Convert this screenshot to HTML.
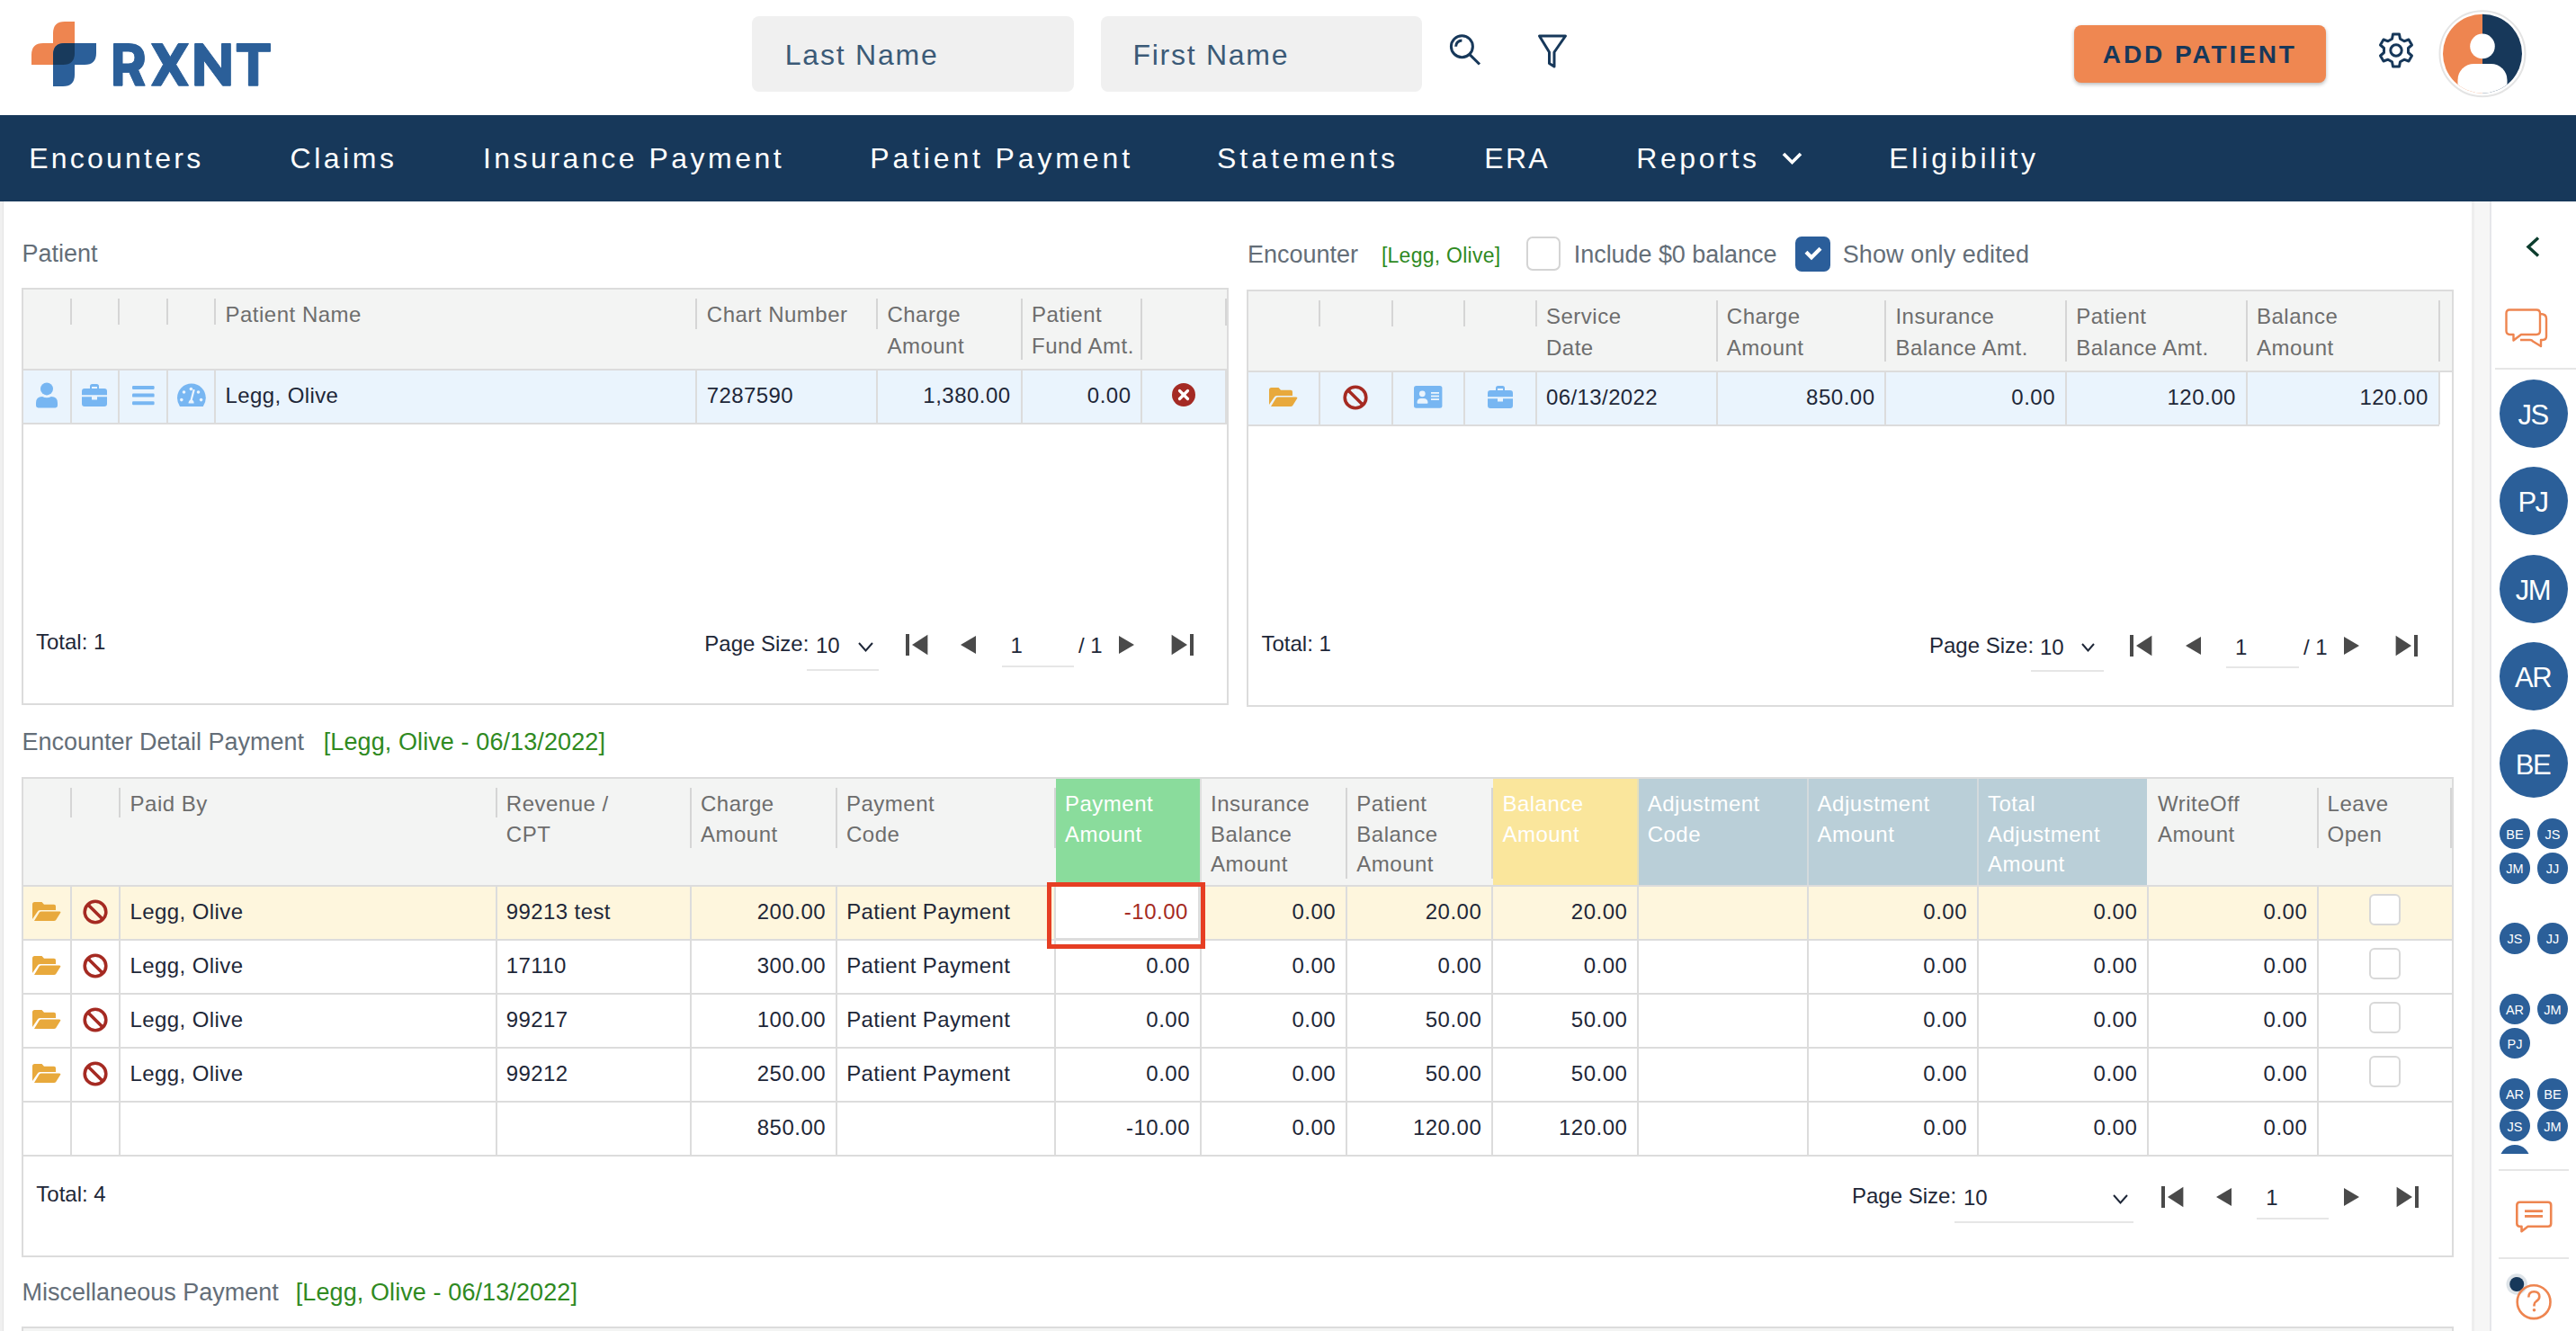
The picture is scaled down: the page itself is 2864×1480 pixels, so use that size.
<!DOCTYPE html>
<html><head><meta charset="utf-8"><style>
html,body{margin:0;padding:0;}
body{width:2864px;height:1480px;position:relative;overflow:hidden;background:#fff;font-family:"Liberation Sans",sans-serif;}
.t{position:absolute;white-space:nowrap;}
.r{position:absolute;}
svg.r{overflow:visible;}
</style></head><body>
<svg class="r" style="left:30px;top:20px" width="82" height="80" viewBox="0 0 82 80">
<path d="M29 17 Q29 4 42 4 H53 V52 H5 V41 Q5 28 18 28 H29 Z" fill="#ee8550"/>
<path d="M29 41 Q29 28 42 28 H77 V39 Q77 52 64 52 H53 V63 Q53 76 40 76 H29 Z" fill="#2b5f99"/>
<path d="M29 41 Q29 28 42 28 H53 V39 Q53 52 40 52 H29 Z" fill="#183a5c"/>
</svg>
<svg class="r" style="left:0px;top:0px" width="320" height="110" viewBox="0 0 320 110"><g fill="#2b5f99" stroke="#2b5f99" stroke-width="1" stroke-linejoin="round">
<path fill-rule="evenodd" d="M126.5 48.5 H143 Q160.5 48.5 160.5 64.5 Q160.5 74 153.6 77.8 L161.2 95.2 H150.5 L143.8 80.4 H136 V95.2 H126.5 Z M136 57 V71 H143 Q150 71 150 64 Q150 57 143 57 Z"/>
<path d="M168.4 48.5 H180.5 L189.3 63.6 L198.2 48.5 H209.6 L195.6 71.7 L209.6 95.2 H198.5 L188.6 79.1 L179 95.2 H168.4 L181.6 71.7 Z"/>
<path d="M216.7 48.5 H225.5 L246.5 77 V48.5 H256.3 V95.2 H247.5 L226.6 66.9 V95.2 H216.7 Z"/>
<path d="M263.2 48.5 H300.5 V57.3 H286.8 V95.2 H276.4 V57.3 H263.2 Z"/></g></svg>
<div class="r" style="left:836px;top:18px;width:358px;height:84px;background:#f0f0f0;border-radius:8px;"></div>
<div class="r" style="left:1224px;top:18px;width:357px;height:84px;background:#f0f0f0;border-radius:8px;"></div>
<div class="t" style="left:872.80px;top:44.91px;font-size:32px;line-height:32px;color:#3b5a77;letter-spacing:1.77px;">Last Name</div>
<div class="t" style="left:1259.50px;top:44.91px;font-size:32px;line-height:32px;color:#3b5a77;letter-spacing:1.73px;">First Name</div>
<svg class="r" style="left:1605px;top:32px" width="48" height="48" viewBox="0 0 48 48"><g fill="none" stroke="#17385a" stroke-width="3"><circle cx="20.4" cy="19.7" r="12"/><line x1="29" y1="28.6" x2="40" y2="39.5"/><path d="M13.6 19.7 A6.8 6.8 0 0 1 20.4 12.9"/></g></svg>
<svg class="r" style="left:1700px;top:30px" width="50" height="50" viewBox="0 0 50 50"><path d="M11.5 10 H40.5 L28 28 V44 L22.5 40.5 V28 Z" fill="none" stroke="#17385a" stroke-width="3" stroke-linejoin="round"/></svg>
<div class="r" style="left:2306px;top:28px;width:280px;height:64px;background:#ef8751;border-radius:8px;box-shadow:0 2px 4px rgba(0,0,0,0.28);"></div>
<div class="t" style="left:2337.80px;top:47.30px;font-size:28px;line-height:28px;color:#17385a;font-weight:bold;letter-spacing:2.91px;">ADD PATIENT</div>
<svg class="r" style="left:2640px;top:33px" width="48" height="48" viewBox="0 0 48 48"><g fill="none" stroke="#17385a" stroke-width="3" stroke-linejoin="round">
<path d="M20.5 5 H27.5 L28.5 10.2 L33 12.8 L38 11 L41.5 17 L37.5 20.5 V25.5 L41.5 29 L38 35 L33 33.2 L28.5 35.8 L27.5 41 H20.5 L19.5 35.8 L15 33.2 L10 35 L6.5 29 L10.5 25.5 V20.5 L6.5 17 L10 11 L15 12.8 L19.5 10.2 Z"/>
<circle cx="24" cy="23" r="6.2"/></g></svg>
<svg class="r" style="left:2710px;top:10px" width="100" height="100" viewBox="0 0 100 100"><defs><clipPath id="avc"><circle cx="50" cy="49.7" r="44"/></clipPath></defs>
<circle cx="50" cy="49.7" r="47.5" fill="none" stroke="#e4e4e4" stroke-width="2"/>
<g clip-path="url(#avc)"><rect x="0" y="0" width="50" height="100" fill="#ee8550"/><rect x="50" y="0" width="50" height="100" fill="#17385a"/>
<circle cx="50" cy="41.4" r="13.8" fill="#fff"/><rect x="22.5" y="61" width="55" height="60" rx="18" fill="#fff"/></g></svg>
<div class="r" style="left:0px;top:128px;width:2864px;height:96px;background:#17385a;"></div>
<div class="t" style="left:32.20px;top:160.11px;font-size:32px;line-height:32px;color:#ffffff;letter-spacing:3.23px;">Encounters</div>
<div class="t" style="left:322.60px;top:160.11px;font-size:32px;line-height:32px;color:#ffffff;letter-spacing:3.50px;">Claims</div>
<div class="t" style="left:536.90px;top:160.11px;font-size:32px;line-height:32px;color:#ffffff;letter-spacing:3.51px;">Insurance Payment</div>
<div class="t" style="left:967.20px;top:160.11px;font-size:32px;line-height:32px;color:#ffffff;letter-spacing:3.86px;">Patient Payment</div>
<div class="t" style="left:1353.00px;top:160.11px;font-size:32px;line-height:32px;color:#ffffff;letter-spacing:4.02px;">Statements</div>
<div class="t" style="left:1650.20px;top:160.11px;font-size:32px;line-height:32px;color:#ffffff;letter-spacing:2.35px;">ERA</div>
<div class="t" style="left:1819.20px;top:160.11px;font-size:32px;line-height:32px;color:#ffffff;letter-spacing:3.62px;">Reports</div>
<div class="t" style="left:2100.20px;top:160.11px;font-size:32px;line-height:32px;color:#ffffff;letter-spacing:3.83px;">Eligibility</div>
<svg class="r" style="left:1978px;top:165px" width="28" height="22" viewBox="0 0 28 22"><path d="M5 6 L14.5 15.5 L24 6" fill="none" stroke="#fff" stroke-width="3.6"/></svg>
<div class="r" style="left:0px;top:224px;width:3px;height:1256px;background:#f0f0f0;"></div>
<div class="r" style="left:3px;top:224px;width:1px;height:1256px;background:#e4e4e4;"></div>
<div class="r" style="left:2748px;top:224px;width:20px;height:1256px;background:#f6f6f6;"></div>
<div class="r" style="left:2748px;top:224px;width:3px;height:1256px;background:#eeeeee;"></div>
<div class="r" style="left:2768px;top:224px;width:2px;height:1256px;background:#e6e7ea;"></div>
<div class="t" style="left:24.50px;top:269.14px;font-size:27px;line-height:27px;color:#646e78;">Patient</div>
<div class="r" style="left:24px;top:320px;width:1342px;height:464px;background:#fff;border:2px solid #dcdcdc;box-sizing:border-box;"></div>
<div class="r" style="left:26px;top:322px;width:1338px;height:88px;background:#f3f4f3;"></div>
<div class="r" style="left:26px;top:410px;width:1338px;height:2px;background:#dcdcdc;"></div>
<div class="r" style="left:26px;top:412px;width:1336px;height:58px;background:#eaf4fd;"></div>
<div class="r" style="left:26px;top:470px;width:1338px;height:2px;background:#dcdcdc;"></div>
<div class="r" style="left:78px;top:412px;width:2px;height:58px;background:#dcdcdc;"></div>
<div class="r" style="left:131px;top:412px;width:2px;height:58px;background:#dcdcdc;"></div>
<div class="r" style="left:185px;top:412px;width:2px;height:58px;background:#dcdcdc;"></div>
<div class="r" style="left:238px;top:412px;width:2px;height:58px;background:#dcdcdc;"></div>
<div class="r" style="left:773px;top:412px;width:2px;height:58px;background:#dcdcdc;"></div>
<div class="r" style="left:974px;top:412px;width:2px;height:58px;background:#dcdcdc;"></div>
<div class="r" style="left:1135px;top:412px;width:2px;height:58px;background:#dcdcdc;"></div>
<div class="r" style="left:1268px;top:412px;width:2px;height:58px;background:#dcdcdc;"></div>
<div class="r" style="left:1362px;top:412px;width:2px;height:58px;background:#dcdcdc;"></div>
<div class="r" style="left:78px;top:332px;width:2px;height:29px;background:#d5d5d5;"></div>
<div class="r" style="left:131px;top:332px;width:2px;height:29px;background:#d5d5d5;"></div>
<div class="r" style="left:185px;top:332px;width:2px;height:29px;background:#d5d5d5;"></div>
<div class="r" style="left:238px;top:332px;width:2px;height:29px;background:#d5d5d5;"></div>
<div class="r" style="left:773px;top:332px;width:2px;height:34px;background:#d5d5d5;"></div>
<div class="r" style="left:974px;top:332px;width:2px;height:34px;background:#d5d5d5;"></div>
<div class="r" style="left:1135px;top:332px;width:2px;height:68px;background:#d5d5d5;"></div>
<div class="r" style="left:1268px;top:332px;width:2px;height:68px;background:#d5d5d5;"></div>
<div class="r" style="left:1362px;top:332px;width:2px;height:30px;background:#d5d5d5;"></div>
<div class="t" style="left:250.50px;top:338.28px;font-size:24px;line-height:24px;color:#6d6d6d;letter-spacing:0.50px;">Patient Name</div>
<div class="t" style="left:785.80px;top:338.08px;font-size:24px;line-height:24px;color:#6d6d6d;letter-spacing:0.50px;">Chart Number</div>
<div class="t" style="left:986.40px;top:338.08px;font-size:24px;line-height:24px;color:#6d6d6d;letter-spacing:0.50px;">Charge</div>
<div class="t" style="left:986.40px;top:373.38px;font-size:24px;line-height:24px;color:#6d6d6d;letter-spacing:0.50px;">Amount</div>
<div class="t" style="left:1147.00px;top:338.08px;font-size:24px;line-height:24px;color:#6d6d6d;letter-spacing:0.50px;">Patient</div>
<div class="t" style="left:1147.00px;top:373.38px;font-size:24px;line-height:24px;color:#6d6d6d;letter-spacing:0.50px;">Fund Amt.</div>
<svg class="r" style="left:38px;top:424px" width="28" height="28" viewBox="0 0 28 28"><circle cx="14" cy="8.4" r="7" fill="#77b6f2"/><path d="M2 27 V24 Q2 17 9 17 Q14 19.5 19 17 Q26 17 26 24 V27 Q26 29.4 23.5 29.4 H4.5 Q2 29.4 2 27 Z" fill="#77b6f2"/></svg>
<svg class="r" style="left:91px;top:427px" width="28" height="25" viewBox="0 0 28 25"><path d="M9 5 V2.5 Q9 0 11.5 0 H16.5 Q19 0 19 2.5 V5 H25 Q28 5 28 8 V12.2 H0 V8 Q0 5 3 5 Z M11 3 V5 H17 V3 Z" fill="#77b6f2" fill-rule="evenodd"/><path d="M0 14.2 H11 V17.5 H17 V14.2 H28 V22 Q28 25 25 25 H3 Q0 25 0 22 Z" fill="#77b6f2"/></svg>
<svg class="r" style="left:146.5px;top:429px" width="25" height="22" viewBox="0 0 25 22"><g fill="#77b6f2"><rect x="0" y="0" width="24.6" height="4" rx="1.2"/><rect x="0" y="8.6" width="24.6" height="4" rx="1.2"/><rect x="0" y="17.2" width="24.6" height="4" rx="1.2"/></g></svg>
<svg class="r" style="left:196.5px;top:427px" width="32" height="25" viewBox="0 0 32 25"><path d="M3 25 Q0 20.5 0 15.5 A15.9 15.9 0 0 1 31.8 15.5 Q31.8 20.5 28.8 25 Z" fill="#77b6f2"/><g fill="#eaf4fd"><circle cx="4.8" cy="17.6" r="1.8"/><circle cx="7.5" cy="9" r="1.8"/><circle cx="15.4" cy="5.6" r="1.8"/><circle cx="23.5" cy="9" r="1.8"/><circle cx="26.6" cy="17.6" r="1.8"/><path d="M17.6 5.8 L19.8 6.6 L16.8 17.6 Q18.6 19 18.6 20.6 V21.6 H12.6 V20.6 Q12.6 18.6 14.6 17.4 Z"/></g></svg>
<div class="t" style="left:250.50px;top:427.68px;font-size:24px;line-height:24px;color:#1e2738;letter-spacing:0.40px;">Legg, Olive</div>
<div class="t" style="left:785.80px;top:427.68px;font-size:24px;line-height:24px;color:#1e2738;letter-spacing:0.40px;">7287590</div>
<div class="t" style="left:1026.30px;top:427.68px;font-size:24px;line-height:24px;color:#1e2738;letter-spacing:0.50px;">1,380.00</div>
<div class="t" style="left:1208.80px;top:427.68px;font-size:24px;line-height:24px;color:#1e2738;letter-spacing:0.50px;">0.00</div>
<svg class="r" style="left:1302px;top:425px" width="28" height="28" viewBox="0 0 28 28"><circle cx="14" cy="14" r="13" fill="#a42a24"/><g stroke="#fff" stroke-width="3.2" stroke-linecap="round"><line x1="9.5" y1="9.5" x2="18.5" y2="18.5"/><line x1="18.5" y1="9.5" x2="9.5" y2="18.5"/></g></svg>
<div class="t" style="left:40.00px;top:701.68px;font-size:24px;line-height:24px;color:#1e2738;">Total: 1</div>
<div class="t" style="left:783.30px;top:704.18px;font-size:24px;line-height:24px;color:#1e2738;">Page Size:</div>
<div class="t" style="left:907.00px;top:705.68px;font-size:24px;line-height:24px;color:#1e2738;">10</div>
<svg class="r" style="left:954px;top:714px" width="17" height="11" viewBox="0 0 17 11"><path d="M1 1 L8.5 9.5 L16 1" fill="none" stroke="#1e2738" stroke-width="2"/></svg>
<div class="r" style="left:897px;top:744px;width:80px;height:2px;background:#e6e6e6;"></div>
<svg class="r" style="left:1006.7px;top:705px" width="25" height="24" viewBox="0 0 25 24"><rect x="0" y="0" width="4" height="24" fill="#4a4a4a"/><path d="M24.4 0.8 V23.2 L7 12.0 Z" fill="#4a4a4a"/></svg>
<svg class="r" style="left:1068px;top:707px" width="17" height="20" viewBox="0 0 17 20"><path d="M17 0 V20 L0 10 Z" fill="#4a4a4a"/></svg>
<div class="t" style="left:1123.40px;top:705.68px;font-size:24px;line-height:24px;color:#1e2738;">1</div>
<div class="r" style="left:1114px;top:740px;width:80px;height:2px;background:#e6e6e6;"></div>
<div class="t" style="left:1199.00px;top:705.68px;font-size:24px;line-height:24px;color:#1e2738;">/ 1</div>
<svg class="r" style="left:1243.7px;top:707px" width="17" height="20" viewBox="0 0 17 20"><path d="M0 0 V20 L17 10 Z" fill="#4a4a4a"/></svg>
<svg class="r" style="left:1301.5px;top:705px" width="25" height="24" viewBox="0 0 25 24"><rect x="21" y="0" width="4" height="24" fill="#4a4a4a"/><path d="M0.6 0.8 V23.2 L18 12.0 Z" fill="#4a4a4a"/></svg>
<div class="t" style="left:1387.00px;top:270.14px;font-size:27px;line-height:27px;color:#646e78;">Encounter</div>
<div class="t" style="left:1535.90px;top:273.13px;font-size:23px;line-height:23px;color:#2f8a1f;letter-spacing:0.26px;">[Legg, Olive]</div>
<div class="r" style="left:1697px;top:263px;width:38px;height:38px;background:#fff;border:2px solid #d4d4d4;border-radius:7px;box-sizing:border-box;"></div>
<div class="t" style="left:1749.80px;top:270.14px;font-size:27px;line-height:27px;color:#646e78;letter-spacing:-0.06px;">Include $0 balance</div>
<div class="r" style="left:1996px;top:263px;width:39px;height:39px;background:#2b5e9a;border-radius:7px;"></div>
<svg class="r" style="left:1996px;top:263px" width="39" height="39" viewBox="0 0 39 39"><path d="M12 17.3 L18 23.3 L28 13.3" fill="none" stroke="#fff" stroke-width="4.2"/></svg>
<div class="t" style="left:2048.70px;top:270.14px;font-size:27px;line-height:27px;color:#646e78;letter-spacing:0.11px;">Show only edited</div>
<div class="r" style="left:1386px;top:322px;width:1342px;height:464px;background:#fff;border:2px solid #dcdcdc;box-sizing:border-box;"></div>
<div class="r" style="left:1388px;top:324px;width:1338px;height:88px;background:#f3f4f3;"></div>
<div class="r" style="left:1388px;top:412px;width:1338px;height:2px;background:#dcdcdc;"></div>
<div class="r" style="left:1388px;top:414px;width:1324px;height:58px;background:#eaf4fd;"></div>
<div class="r" style="left:1388px;top:472px;width:1324px;height:2px;background:#dcdcdc;"></div>
<div class="r" style="left:1466px;top:414px;width:2px;height:58px;background:#dcdcdc;"></div>
<div class="r" style="left:1547px;top:414px;width:2px;height:58px;background:#dcdcdc;"></div>
<div class="r" style="left:1627px;top:414px;width:2px;height:58px;background:#dcdcdc;"></div>
<div class="r" style="left:1707px;top:414px;width:2px;height:58px;background:#dcdcdc;"></div>
<div class="r" style="left:1908px;top:414px;width:2px;height:58px;background:#dcdcdc;"></div>
<div class="r" style="left:2095px;top:414px;width:2px;height:58px;background:#dcdcdc;"></div>
<div class="r" style="left:2296px;top:414px;width:2px;height:58px;background:#dcdcdc;"></div>
<div class="r" style="left:2497px;top:414px;width:2px;height:58px;background:#dcdcdc;"></div>
<div class="r" style="left:2711px;top:414px;width:2px;height:58px;background:#dcdcdc;"></div>
<div class="r" style="left:1466px;top:334px;width:2px;height:29px;background:#d5d5d5;"></div>
<div class="r" style="left:1547px;top:334px;width:2px;height:29px;background:#d5d5d5;"></div>
<div class="r" style="left:1627px;top:334px;width:2px;height:29px;background:#d5d5d5;"></div>
<div class="r" style="left:1707px;top:334px;width:2px;height:29px;background:#d5d5d5;"></div>
<div class="r" style="left:1908px;top:334px;width:2px;height:68px;background:#d5d5d5;"></div>
<div class="r" style="left:2095px;top:334px;width:2px;height:68px;background:#d5d5d5;"></div>
<div class="r" style="left:2296px;top:334px;width:2px;height:68px;background:#d5d5d5;"></div>
<div class="r" style="left:2497px;top:334px;width:2px;height:68px;background:#d5d5d5;"></div>
<div class="r" style="left:2711px;top:334px;width:2px;height:68px;background:#d5d5d5;"></div>
<div class="t" style="left:1719.00px;top:339.68px;font-size:24px;line-height:24px;color:#6d6d6d;letter-spacing:0.50px;">Service</div>
<div class="t" style="left:1719.00px;top:374.68px;font-size:24px;line-height:24px;color:#6d6d6d;letter-spacing:0.50px;">Date</div>
<div class="t" style="left:1919.80px;top:339.68px;font-size:24px;line-height:24px;color:#6d6d6d;letter-spacing:0.50px;">Charge</div>
<div class="t" style="left:1919.80px;top:374.68px;font-size:24px;line-height:24px;color:#6d6d6d;letter-spacing:0.50px;">Amount</div>
<div class="t" style="left:2107.40px;top:339.68px;font-size:24px;line-height:24px;color:#6d6d6d;letter-spacing:0.50px;">Insurance</div>
<div class="t" style="left:2107.40px;top:374.68px;font-size:24px;line-height:24px;color:#6d6d6d;letter-spacing:0.50px;">Balance Amt.</div>
<div class="t" style="left:2308.20px;top:339.68px;font-size:24px;line-height:24px;color:#6d6d6d;letter-spacing:0.50px;">Patient</div>
<div class="t" style="left:2308.20px;top:374.68px;font-size:24px;line-height:24px;color:#6d6d6d;letter-spacing:0.50px;">Balance Amt.</div>
<div class="t" style="left:2509.00px;top:339.68px;font-size:24px;line-height:24px;color:#6d6d6d;letter-spacing:0.50px;">Balance</div>
<div class="t" style="left:2509.00px;top:374.68px;font-size:24px;line-height:24px;color:#6d6d6d;letter-spacing:0.50px;">Amount</div>
<svg class="r" style="left:1411px;top:431px" width="32" height="21" viewBox="0 0 32 21"><path d="M0 19 V2.5 Q0 0 2.5 0 H10.5 L13 2.8 H24 Q26 2.8 26 4.8 V9 H8.6 Q6.5 9 5.5 11 Z" fill="#e8a93c"/><path d="M2 21 L7.6 11.8 Q8.4 10.5 10 10.5 H30 Q32 10.5 31.2 12 L26.2 20 Q25.4 21 24 21 Z" fill="#e8a93c"/></svg>
<svg class="r" style="left:1491.4px;top:425.6px" width="32" height="32" viewBox="0 0 32 32"><g fill="none" stroke="#a52a22" stroke-width="3.6"><circle cx="16" cy="16" r="11.799999999999999"/><line x1="7.657400000000001" y1="7.657400000000001" x2="24.342599999999997" y2="24.342599999999997"/></g></svg>
<svg class="r" style="left:1572px;top:429px" width="32" height="25" viewBox="0 0 32 25"><rect x="0" y="0" width="31.4" height="24.8" rx="2.5" fill="#77b6f2"/><g fill="#eaf4fd"><circle cx="9.3" cy="8.8" r="3.4"/><path d="M3.5 19 Q3.5 14 8 14 H10.5 Q15.5 14 15.5 19 Q15.5 19.8 14.5 19.8 H4.5 Q3.5 19.8 3.5 19 Z"/><rect x="19" y="7" width="9" height="1.8"/><rect x="19" y="10.6" width="9" height="1.8"/><rect x="19" y="14.2" width="9" height="1.8"/></g></svg>
<svg class="r" style="left:1654px;top:429px" width="28" height="25" viewBox="0 0 28 25"><path d="M9 5 V2.5 Q9 0 11.5 0 H16.5 Q19 0 19 2.5 V5 H25 Q28 5 28 8 V12.2 H0 V8 Q0 5 3 5 Z M11 3 V5 H17 V3 Z" fill="#77b6f2" fill-rule="evenodd"/><path d="M0 14.2 H11 V17.5 H17 V14.2 H28 V22 Q28 25 25 25 H3 Q0 25 0 22 Z" fill="#77b6f2"/></svg>
<div class="t" style="left:1719.00px;top:429.68px;font-size:24px;line-height:24px;color:#1e2738;letter-spacing:0.40px;">06/13/2022</div>
<div class="t" style="left:2008.10px;top:429.68px;font-size:24px;line-height:24px;color:#1e2738;letter-spacing:0.50px;">850.00</div>
<div class="t" style="left:2236.30px;top:429.68px;font-size:24px;line-height:24px;color:#1e2738;letter-spacing:0.50px;">0.00</div>
<div class="t" style="left:2409.50px;top:429.68px;font-size:24px;line-height:24px;color:#1e2738;letter-spacing:0.50px;">120.00</div>
<div class="t" style="left:2623.40px;top:429.68px;font-size:24px;line-height:24px;color:#1e2738;letter-spacing:0.50px;">120.00</div>
<div class="t" style="left:1402.50px;top:703.68px;font-size:24px;line-height:24px;color:#1e2738;">Total: 1</div>
<div class="t" style="left:2145.00px;top:705.68px;font-size:24px;line-height:24px;color:#1e2738;">Page Size:</div>
<div class="t" style="left:2268.00px;top:707.68px;font-size:24px;line-height:24px;color:#1e2738;">10</div>
<svg class="r" style="left:2314px;top:715px" width="15" height="10" viewBox="0 0 15 10"><path d="M1 1 L7.5 8.5 L14 1" fill="none" stroke="#1e2738" stroke-width="2"/></svg>
<div class="r" style="left:2258px;top:745px;width:81px;height:2px;background:#e6e6e6;"></div>
<svg class="r" style="left:2368px;top:706px" width="25" height="24" viewBox="0 0 25 24"><rect x="0" y="0" width="4" height="24" fill="#4a4a4a"/><path d="M24.4 0.8 V23.2 L7 12.0 Z" fill="#4a4a4a"/></svg>
<svg class="r" style="left:2430px;top:708px" width="17" height="20" viewBox="0 0 17 20"><path d="M17 0 V20 L0 10 Z" fill="#4a4a4a"/></svg>
<div class="t" style="left:2485.00px;top:707.68px;font-size:24px;line-height:24px;color:#1e2738;">1</div>
<div class="r" style="left:2475px;top:741px;width:81px;height:2px;background:#e6e6e6;"></div>
<div class="t" style="left:2561.00px;top:707.68px;font-size:24px;line-height:24px;color:#1e2738;">/ 1</div>
<svg class="r" style="left:2605.7px;top:708px" width="17" height="20" viewBox="0 0 17 20"><path d="M0 0 V20 L17 10 Z" fill="#4a4a4a"/></svg>
<svg class="r" style="left:2663px;top:706px" width="25" height="24" viewBox="0 0 25 24"><rect x="21" y="0" width="4" height="24" fill="#4a4a4a"/><path d="M0.6 0.8 V23.2 L18 12.0 Z" fill="#4a4a4a"/></svg>
<div class="t" style="left:24.60px;top:811.84px;font-size:27px;line-height:27px;color:#646e78;letter-spacing:-0.01px;">Encounter Detail Payment</div>
<div class="t" style="left:359.70px;top:811.84px;font-size:27px;line-height:27px;color:#2f8a1f;letter-spacing:0.10px;">[Legg, Olive - 06/13/2022]</div>
<div class="r" style="left:24px;top:864px;width:2704px;height:534px;background:#fff;border:2px solid #dcdcdc;box-sizing:border-box;"></div>
<div class="r" style="left:26px;top:866px;width:2700px;height:118px;background:#f3f4f3;"></div>
<div class="r" style="left:1174px;top:866px;width:160px;height:118px;background:#8adc9c;"></div>
<div class="r" style="left:1660px;top:866px;width:161px;height:118px;background:#fae69c;"></div>
<div class="r" style="left:1822px;top:866px;width:565px;height:118px;background:#bacfd8;"></div>
<div class="r" style="left:2009px;top:866px;width:2px;height:118px;background:#d3dadd;"></div>
<div class="r" style="left:2198px;top:866px;width:2px;height:118px;background:#d3dadd;"></div>
<div class="r" style="left:26px;top:984px;width:2700px;height:2px;background:#dcdcdc;"></div>
<div class="r" style="left:26px;top:986px;width:2700px;height:58px;background:#fef6dd;"></div>
<div class="r" style="left:26px;top:1044px;width:2700px;height:2px;background:#dcdcdc;"></div>
<div class="r" style="left:26px;top:1104px;width:2700px;height:2px;background:#dcdcdc;"></div>
<div class="r" style="left:26px;top:1164px;width:2700px;height:2px;background:#dcdcdc;"></div>
<div class="r" style="left:26px;top:1224px;width:2700px;height:2px;background:#dcdcdc;"></div>
<div class="r" style="left:26px;top:1284px;width:2700px;height:2px;background:#dcdcdc;"></div>
<div class="r" style="left:78px;top:986px;width:2px;height:298px;background:#dcdcdc;"></div>
<div class="r" style="left:132px;top:986px;width:2px;height:298px;background:#dcdcdc;"></div>
<div class="r" style="left:551px;top:986px;width:2px;height:298px;background:#dcdcdc;"></div>
<div class="r" style="left:767px;top:986px;width:2px;height:298px;background:#dcdcdc;"></div>
<div class="r" style="left:929px;top:986px;width:2px;height:298px;background:#dcdcdc;"></div>
<div class="r" style="left:1172px;top:986px;width:2px;height:298px;background:#dcdcdc;"></div>
<div class="r" style="left:1334px;top:986px;width:2px;height:298px;background:#dcdcdc;"></div>
<div class="r" style="left:1496px;top:986px;width:2px;height:298px;background:#dcdcdc;"></div>
<div class="r" style="left:1658px;top:986px;width:2px;height:298px;background:#dcdcdc;"></div>
<div class="r" style="left:1820px;top:986px;width:2px;height:298px;background:#dcdcdc;"></div>
<div class="r" style="left:2009px;top:986px;width:2px;height:298px;background:#dcdcdc;"></div>
<div class="r" style="left:2198px;top:986px;width:2px;height:298px;background:#dcdcdc;"></div>
<div class="r" style="left:2387px;top:986px;width:2px;height:298px;background:#dcdcdc;"></div>
<div class="r" style="left:2576px;top:986px;width:2px;height:298px;background:#dcdcdc;"></div>
<div class="r" style="left:78px;top:876px;width:2px;height:33px;background:#d5d5d5;"></div>
<div class="r" style="left:132px;top:876px;width:2px;height:33px;background:#d5d5d5;"></div>
<div class="r" style="left:551px;top:876px;width:2px;height:33px;background:#d5d5d5;"></div>
<div class="r" style="left:767px;top:876px;width:2px;height:67px;background:#d5d5d5;"></div>
<div class="r" style="left:929px;top:876px;width:2px;height:67px;background:#d5d5d5;"></div>
<div class="r" style="left:1172px;top:876px;width:2px;height:67px;background:#d5d5d5;"></div>
<div class="r" style="left:1496px;top:876px;width:2px;height:101px;background:#d5d5d5;"></div>
<div class="r" style="left:1658px;top:876px;width:2px;height:101px;background:#d5d5d5;"></div>
<div class="r" style="left:2576px;top:876px;width:2px;height:67px;background:#d5d5d5;"></div>
<div class="r" style="left:1820px;top:866px;width:2px;height:118px;background:#e8e0b8;"></div>
<div class="r" style="left:1334px;top:866px;width:2px;height:118px;background:#dfe0df;"></div>
<div class="r" style="left:2724px;top:876px;width:2px;height:67px;background:#d5d5d5;"></div>
<div class="t" style="left:144.60px;top:882.28px;font-size:24px;line-height:24px;color:#6d6d6d;letter-spacing:0.50px;">Paid By</div>
<div class="t" style="left:562.80px;top:882.28px;font-size:24px;line-height:24px;color:#6d6d6d;letter-spacing:0.50px;">Revenue /</div>
<div class="t" style="left:562.80px;top:915.98px;font-size:24px;line-height:24px;color:#6d6d6d;letter-spacing:0.50px;">CPT</div>
<div class="t" style="left:779.00px;top:882.28px;font-size:24px;line-height:24px;color:#6d6d6d;letter-spacing:0.50px;">Charge</div>
<div class="t" style="left:779.00px;top:915.98px;font-size:24px;line-height:24px;color:#6d6d6d;letter-spacing:0.50px;">Amount</div>
<div class="t" style="left:941.00px;top:882.28px;font-size:24px;line-height:24px;color:#6d6d6d;letter-spacing:0.50px;">Payment</div>
<div class="t" style="left:941.00px;top:915.98px;font-size:24px;line-height:24px;color:#6d6d6d;letter-spacing:0.50px;">Code</div>
<div class="t" style="left:1184.00px;top:882.28px;font-size:24px;line-height:24px;color:#fff;letter-spacing:0.50px;">Payment</div>
<div class="t" style="left:1184.00px;top:915.98px;font-size:24px;line-height:24px;color:#fff;letter-spacing:0.50px;">Amount</div>
<div class="t" style="left:1346.10px;top:882.28px;font-size:24px;line-height:24px;color:#6d6d6d;letter-spacing:0.50px;">Insurance</div>
<div class="t" style="left:1346.10px;top:915.98px;font-size:24px;line-height:24px;color:#6d6d6d;letter-spacing:0.50px;">Balance</div>
<div class="t" style="left:1346.10px;top:948.98px;font-size:24px;line-height:24px;color:#6d6d6d;letter-spacing:0.50px;">Amount</div>
<div class="t" style="left:1508.30px;top:882.28px;font-size:24px;line-height:24px;color:#6d6d6d;letter-spacing:0.50px;">Patient</div>
<div class="t" style="left:1508.30px;top:915.98px;font-size:24px;line-height:24px;color:#6d6d6d;letter-spacing:0.50px;">Balance</div>
<div class="t" style="left:1508.30px;top:948.98px;font-size:24px;line-height:24px;color:#6d6d6d;letter-spacing:0.50px;">Amount</div>
<div class="t" style="left:1670.40px;top:882.28px;font-size:24px;line-height:24px;color:#fff;letter-spacing:0.50px;">Balance</div>
<div class="t" style="left:1670.40px;top:915.98px;font-size:24px;line-height:24px;color:#fff;letter-spacing:0.50px;">Amount</div>
<div class="t" style="left:1831.70px;top:882.28px;font-size:24px;line-height:24px;color:#fff;letter-spacing:0.50px;">Adjustment</div>
<div class="t" style="left:1831.70px;top:915.98px;font-size:24px;line-height:24px;color:#fff;letter-spacing:0.50px;">Code</div>
<div class="t" style="left:2020.60px;top:882.28px;font-size:24px;line-height:24px;color:#fff;letter-spacing:0.50px;">Adjustment</div>
<div class="t" style="left:2020.60px;top:915.98px;font-size:24px;line-height:24px;color:#fff;letter-spacing:0.50px;">Amount</div>
<div class="t" style="left:2210.00px;top:882.28px;font-size:24px;line-height:24px;color:#fff;letter-spacing:0.50px;">Total</div>
<div class="t" style="left:2210.00px;top:915.98px;font-size:24px;line-height:24px;color:#fff;letter-spacing:0.50px;">Adjustment</div>
<div class="t" style="left:2210.00px;top:948.98px;font-size:24px;line-height:24px;color:#fff;letter-spacing:0.50px;">Amount</div>
<div class="t" style="left:2399.00px;top:882.28px;font-size:24px;line-height:24px;color:#6d6d6d;letter-spacing:0.50px;">WriteOff</div>
<div class="t" style="left:2399.00px;top:915.98px;font-size:24px;line-height:24px;color:#6d6d6d;letter-spacing:0.50px;">Amount</div>
<div class="t" style="left:2587.60px;top:882.28px;font-size:24px;line-height:24px;color:#6d6d6d;letter-spacing:0.50px;">Leave</div>
<div class="t" style="left:2587.60px;top:915.98px;font-size:24px;line-height:24px;color:#6d6d6d;letter-spacing:0.50px;">Open</div>
<svg class="r" style="left:36px;top:1003px" width="32" height="21" viewBox="0 0 32 21"><path d="M0 19 V2.5 Q0 0 2.5 0 H10.5 L13 2.8 H24 Q26 2.8 26 4.8 V9 H8.6 Q6.5 9 5.5 11 Z" fill="#e8a93c"/><path d="M2 21 L7.6 11.8 Q8.4 10.5 10 10.5 H30 Q32 10.5 31.2 12 L26.2 20 Q25.4 21 24 21 Z" fill="#e8a93c"/></svg>
<svg class="r" style="left:90px;top:997.5px" width="32" height="32" viewBox="0 0 32 32"><g fill="none" stroke="#a52a22" stroke-width="3.6"><circle cx="16" cy="16" r="11.799999999999999"/><line x1="7.657400000000001" y1="7.657400000000001" x2="24.342599999999997" y2="24.342599999999997"/></g></svg>
<div class="t" style="left:144.60px;top:1001.68px;font-size:24px;line-height:24px;color:#1e2738;letter-spacing:0.40px;">Legg, Olive</div>
<div class="t" style="left:562.80px;top:1001.68px;font-size:24px;line-height:24px;color:#1e2738;letter-spacing:0.40px;">99213 test</div>
<div class="t" style="left:841.70px;top:1001.68px;font-size:24px;line-height:24px;color:#1e2738;letter-spacing:0.50px;">200.00</div>
<div class="t" style="left:941.20px;top:1001.68px;font-size:24px;line-height:24px;color:#1e2738;letter-spacing:0.40px;">Patient Payment</div>
<div class="r" style="left:1173px;top:986px;width:161px;height:60px;background:#fff;border-left:1px solid #dcdcdc;border-right:2px solid #dcdcdc;border-bottom:3px solid #dcdcdc;box-sizing:border-box;"></div>
<div class="t" style="left:1249.85px;top:1001.68px;font-size:24px;line-height:24px;color:#a52a22;letter-spacing:0.50px;">-10.00</div>
<div class="t" style="left:1436.50px;top:1001.68px;font-size:24px;line-height:24px;color:#1e2738;letter-spacing:0.50px;">0.00</div>
<div class="t" style="left:1584.75px;top:1001.68px;font-size:24px;line-height:24px;color:#1e2738;letter-spacing:0.50px;">20.00</div>
<div class="t" style="left:1746.85px;top:1001.68px;font-size:24px;line-height:24px;color:#1e2738;letter-spacing:0.50px;">20.00</div>
<div class="t" style="left:2138.30px;top:1001.68px;font-size:24px;line-height:24px;color:#1e2738;letter-spacing:0.50px;">0.00</div>
<div class="t" style="left:2327.60px;top:1001.68px;font-size:24px;line-height:24px;color:#1e2738;letter-spacing:0.50px;">0.00</div>
<div class="t" style="left:2516.60px;top:1001.68px;font-size:24px;line-height:24px;color:#1e2738;letter-spacing:0.50px;">0.00</div>
<div class="r" style="left:2634px;top:994px;width:35px;height:35px;background:#fff;border:2px solid #d8d8d8;border-radius:6px;box-sizing:border-box;"></div>
<svg class="r" style="left:36px;top:1063px" width="32" height="21" viewBox="0 0 32 21"><path d="M0 19 V2.5 Q0 0 2.5 0 H10.5 L13 2.8 H24 Q26 2.8 26 4.8 V9 H8.6 Q6.5 9 5.5 11 Z" fill="#e8a93c"/><path d="M2 21 L7.6 11.8 Q8.4 10.5 10 10.5 H30 Q32 10.5 31.2 12 L26.2 20 Q25.4 21 24 21 Z" fill="#e8a93c"/></svg>
<svg class="r" style="left:90px;top:1057.5px" width="32" height="32" viewBox="0 0 32 32"><g fill="none" stroke="#a52a22" stroke-width="3.6"><circle cx="16" cy="16" r="11.799999999999999"/><line x1="7.657400000000001" y1="7.657400000000001" x2="24.342599999999997" y2="24.342599999999997"/></g></svg>
<div class="t" style="left:144.60px;top:1061.68px;font-size:24px;line-height:24px;color:#1e2738;letter-spacing:0.40px;">Legg, Olive</div>
<div class="t" style="left:562.80px;top:1061.68px;font-size:24px;line-height:24px;color:#1e2738;letter-spacing:0.40px;">17110</div>
<div class="t" style="left:841.70px;top:1061.68px;font-size:24px;line-height:24px;color:#1e2738;letter-spacing:0.50px;">300.00</div>
<div class="t" style="left:941.20px;top:1061.68px;font-size:24px;line-height:24px;color:#1e2738;letter-spacing:0.40px;">Patient Payment</div>
<div class="t" style="left:1274.30px;top:1061.68px;font-size:24px;line-height:24px;color:#1e2738;letter-spacing:0.50px;">0.00</div>
<div class="t" style="left:1436.50px;top:1061.68px;font-size:24px;line-height:24px;color:#1e2738;letter-spacing:0.50px;">0.00</div>
<div class="t" style="left:1598.60px;top:1061.68px;font-size:24px;line-height:24px;color:#1e2738;letter-spacing:0.50px;">0.00</div>
<div class="t" style="left:1760.70px;top:1061.68px;font-size:24px;line-height:24px;color:#1e2738;letter-spacing:0.50px;">0.00</div>
<div class="t" style="left:2138.30px;top:1061.68px;font-size:24px;line-height:24px;color:#1e2738;letter-spacing:0.50px;">0.00</div>
<div class="t" style="left:2327.60px;top:1061.68px;font-size:24px;line-height:24px;color:#1e2738;letter-spacing:0.50px;">0.00</div>
<div class="t" style="left:2516.60px;top:1061.68px;font-size:24px;line-height:24px;color:#1e2738;letter-spacing:0.50px;">0.00</div>
<div class="r" style="left:2634px;top:1054px;width:35px;height:35px;background:#fff;border:2px solid #d8d8d8;border-radius:6px;box-sizing:border-box;"></div>
<svg class="r" style="left:36px;top:1123px" width="32" height="21" viewBox="0 0 32 21"><path d="M0 19 V2.5 Q0 0 2.5 0 H10.5 L13 2.8 H24 Q26 2.8 26 4.8 V9 H8.6 Q6.5 9 5.5 11 Z" fill="#e8a93c"/><path d="M2 21 L7.6 11.8 Q8.4 10.5 10 10.5 H30 Q32 10.5 31.2 12 L26.2 20 Q25.4 21 24 21 Z" fill="#e8a93c"/></svg>
<svg class="r" style="left:90px;top:1117.5px" width="32" height="32" viewBox="0 0 32 32"><g fill="none" stroke="#a52a22" stroke-width="3.6"><circle cx="16" cy="16" r="11.799999999999999"/><line x1="7.657400000000001" y1="7.657400000000001" x2="24.342599999999997" y2="24.342599999999997"/></g></svg>
<div class="t" style="left:144.60px;top:1121.68px;font-size:24px;line-height:24px;color:#1e2738;letter-spacing:0.40px;">Legg, Olive</div>
<div class="t" style="left:562.80px;top:1121.68px;font-size:24px;line-height:24px;color:#1e2738;letter-spacing:0.40px;">99217</div>
<div class="t" style="left:841.70px;top:1121.68px;font-size:24px;line-height:24px;color:#1e2738;letter-spacing:0.50px;">100.00</div>
<div class="t" style="left:941.20px;top:1121.68px;font-size:24px;line-height:24px;color:#1e2738;letter-spacing:0.40px;">Patient Payment</div>
<div class="t" style="left:1274.30px;top:1121.68px;font-size:24px;line-height:24px;color:#1e2738;letter-spacing:0.50px;">0.00</div>
<div class="t" style="left:1436.50px;top:1121.68px;font-size:24px;line-height:24px;color:#1e2738;letter-spacing:0.50px;">0.00</div>
<div class="t" style="left:1584.75px;top:1121.68px;font-size:24px;line-height:24px;color:#1e2738;letter-spacing:0.50px;">50.00</div>
<div class="t" style="left:1746.85px;top:1121.68px;font-size:24px;line-height:24px;color:#1e2738;letter-spacing:0.50px;">50.00</div>
<div class="t" style="left:2138.30px;top:1121.68px;font-size:24px;line-height:24px;color:#1e2738;letter-spacing:0.50px;">0.00</div>
<div class="t" style="left:2327.60px;top:1121.68px;font-size:24px;line-height:24px;color:#1e2738;letter-spacing:0.50px;">0.00</div>
<div class="t" style="left:2516.60px;top:1121.68px;font-size:24px;line-height:24px;color:#1e2738;letter-spacing:0.50px;">0.00</div>
<div class="r" style="left:2634px;top:1114px;width:35px;height:35px;background:#fff;border:2px solid #d8d8d8;border-radius:6px;box-sizing:border-box;"></div>
<svg class="r" style="left:36px;top:1183px" width="32" height="21" viewBox="0 0 32 21"><path d="M0 19 V2.5 Q0 0 2.5 0 H10.5 L13 2.8 H24 Q26 2.8 26 4.8 V9 H8.6 Q6.5 9 5.5 11 Z" fill="#e8a93c"/><path d="M2 21 L7.6 11.8 Q8.4 10.5 10 10.5 H30 Q32 10.5 31.2 12 L26.2 20 Q25.4 21 24 21 Z" fill="#e8a93c"/></svg>
<svg class="r" style="left:90px;top:1177.5px" width="32" height="32" viewBox="0 0 32 32"><g fill="none" stroke="#a52a22" stroke-width="3.6"><circle cx="16" cy="16" r="11.799999999999999"/><line x1="7.657400000000001" y1="7.657400000000001" x2="24.342599999999997" y2="24.342599999999997"/></g></svg>
<div class="t" style="left:144.60px;top:1181.68px;font-size:24px;line-height:24px;color:#1e2738;letter-spacing:0.40px;">Legg, Olive</div>
<div class="t" style="left:562.80px;top:1181.68px;font-size:24px;line-height:24px;color:#1e2738;letter-spacing:0.40px;">99212</div>
<div class="t" style="left:841.70px;top:1181.68px;font-size:24px;line-height:24px;color:#1e2738;letter-spacing:0.50px;">250.00</div>
<div class="t" style="left:941.20px;top:1181.68px;font-size:24px;line-height:24px;color:#1e2738;letter-spacing:0.40px;">Patient Payment</div>
<div class="t" style="left:1274.30px;top:1181.68px;font-size:24px;line-height:24px;color:#1e2738;letter-spacing:0.50px;">0.00</div>
<div class="t" style="left:1436.50px;top:1181.68px;font-size:24px;line-height:24px;color:#1e2738;letter-spacing:0.50px;">0.00</div>
<div class="t" style="left:1584.75px;top:1181.68px;font-size:24px;line-height:24px;color:#1e2738;letter-spacing:0.50px;">50.00</div>
<div class="t" style="left:1746.85px;top:1181.68px;font-size:24px;line-height:24px;color:#1e2738;letter-spacing:0.50px;">50.00</div>
<div class="t" style="left:2138.30px;top:1181.68px;font-size:24px;line-height:24px;color:#1e2738;letter-spacing:0.50px;">0.00</div>
<div class="t" style="left:2327.60px;top:1181.68px;font-size:24px;line-height:24px;color:#1e2738;letter-spacing:0.50px;">0.00</div>
<div class="t" style="left:2516.60px;top:1181.68px;font-size:24px;line-height:24px;color:#1e2738;letter-spacing:0.50px;">0.00</div>
<div class="r" style="left:2634px;top:1174px;width:35px;height:35px;background:#fff;border:2px solid #d8d8d8;border-radius:6px;box-sizing:border-box;"></div>
<div class="t" style="left:841.70px;top:1241.68px;font-size:24px;line-height:24px;color:#1e2738;letter-spacing:0.50px;">850.00</div>
<div class="t" style="left:1251.95px;top:1241.68px;font-size:24px;line-height:24px;color:#1e2738;letter-spacing:0.50px;">-10.00</div>
<div class="t" style="left:1436.50px;top:1241.68px;font-size:24px;line-height:24px;color:#1e2738;letter-spacing:0.50px;">0.00</div>
<div class="t" style="left:1570.90px;top:1241.68px;font-size:24px;line-height:24px;color:#1e2738;letter-spacing:0.50px;">120.00</div>
<div class="t" style="left:1733.00px;top:1241.68px;font-size:24px;line-height:24px;color:#1e2738;letter-spacing:0.50px;">120.00</div>
<div class="t" style="left:2138.30px;top:1241.68px;font-size:24px;line-height:24px;color:#1e2738;letter-spacing:0.50px;">0.00</div>
<div class="t" style="left:2327.60px;top:1241.68px;font-size:24px;line-height:24px;color:#1e2738;letter-spacing:0.50px;">0.00</div>
<div class="t" style="left:2516.60px;top:1241.68px;font-size:24px;line-height:24px;color:#1e2738;letter-spacing:0.50px;">0.00</div>
<div class="r" style="left:1164px;top:981px;width:176px;height:74px;background:transparent;border:5px solid #e63e23;box-sizing:border-box;"></div>
<div class="t" style="left:40.30px;top:1315.68px;font-size:24px;line-height:24px;color:#1e2738;">Total: 4</div>
<div class="t" style="left:2059.00px;top:1318.08px;font-size:24px;line-height:24px;color:#1e2738;">Page Size:</div>
<div class="t" style="left:2183.00px;top:1320.18px;font-size:24px;line-height:24px;color:#1e2738;">10</div>
<svg class="r" style="left:2349px;top:1328px" width="17" height="11" viewBox="0 0 17 11"><path d="M1 1 L8.5 9.5 L16 1" fill="none" stroke="#1e2738" stroke-width="2"/></svg>
<div class="r" style="left:2173px;top:1358px;width:199px;height:2px;background:#e6e6e6;"></div>
<svg class="r" style="left:2403px;top:1319px" width="25" height="24" viewBox="0 0 25 24"><rect x="0" y="0" width="4" height="24" fill="#4a4a4a"/><path d="M24.4 0.8 V23.2 L7 12.0 Z" fill="#4a4a4a"/></svg>
<svg class="r" style="left:2464px;top:1321px" width="17" height="20" viewBox="0 0 17 20"><path d="M17 0 V20 L0 10 Z" fill="#4a4a4a"/></svg>
<div class="t" style="left:2519.30px;top:1320.18px;font-size:24px;line-height:24px;color:#1e2738;">1</div>
<div class="r" style="left:2509px;top:1354px;width:80px;height:2px;background:#e6e6e6;"></div>
<svg class="r" style="left:2606px;top:1321px" width="17" height="20" viewBox="0 0 17 20"><path d="M0 0 V20 L17 10 Z" fill="#4a4a4a"/></svg>
<svg class="r" style="left:2664px;top:1319px" width="25" height="24" viewBox="0 0 25 24"><rect x="21" y="0" width="4" height="24" fill="#4a4a4a"/><path d="M0.6 0.8 V23.2 L18 12.0 Z" fill="#4a4a4a"/></svg>
<div class="t" style="left:24.60px;top:1423.74px;font-size:27px;line-height:27px;color:#646e78;">Miscellaneous Payment</div>
<div class="t" style="left:328.70px;top:1423.74px;font-size:27px;line-height:27px;color:#2f8a1f;letter-spacing:0.10px;">[Legg, Olive - 06/13/2022]</div>
<div class="r" style="left:24px;top:1475px;width:2704px;height:125px;background:#fff;border:2px solid #dcdcdc;box-sizing:border-box;"></div>
<div class="r" style="left:26px;top:1477px;width:2700px;height:40px;background:#f3f4f3;"></div>
<svg class="r" style="left:2800px;top:258px" width="30" height="34" viewBox="0 0 30 34"><path d="M22 6.5 L11 16.5 L22 26.5" fill="none" stroke="#0c3d2e" stroke-width="3.4"/></svg>
<svg class="r" style="left:2782px;top:340px" width="54" height="52" viewBox="0 0 54 52"><g fill="none" stroke="#ee8550" stroke-width="2.4" stroke-linejoin="round">
<path d="M8 4.5 H38 Q42 4.5 42 8.5 V28 Q42 32 38 32 H21 L12.5 38.5 V32 H8.5 Q4.5 32 4.5 28 V8.5 Q4.5 4.5 8 4.5 Z"/>
<path d="M42 9 Q49 9 49 14 V34 Q49 38 45 38 H43 V45 L34 39.5 Q33 38 31 38 H20"/></g></svg>
<div class="r" style="left:2774px;top:409px;width:90px;height:2px;background:#e6e6e6;"></div>
<div class="r" style="left:2779px;top:422px;width:76px;height:76px;border-radius:50%;background:#2b5f99;"></div>
<div class="t" style="left:2799.40px;top:446.26px;font-size:31px;line-height:31px;color:#fff;letter-spacing:-1.5px;">JS</div>
<div class="r" style="left:2779px;top:519px;width:76px;height:76px;border-radius:50%;background:#2b5f99;"></div>
<div class="t" style="left:2799.40px;top:543.26px;font-size:31px;line-height:31px;color:#fff;letter-spacing:-1.5px;">PJ</div>
<div class="r" style="left:2779px;top:617px;width:76px;height:76px;border-radius:50%;background:#2b5f99;"></div>
<div class="t" style="left:2796.85px;top:641.26px;font-size:31px;line-height:31px;color:#fff;letter-spacing:-1.5px;">JM</div>
<div class="r" style="left:2779px;top:714px;width:76px;height:76px;border-radius:50%;background:#2b5f99;"></div>
<div class="t" style="left:2795.97px;top:738.26px;font-size:31px;line-height:31px;color:#fff;letter-spacing:-1.5px;">AR</div>
<div class="r" style="left:2779px;top:811px;width:76px;height:76px;border-radius:50%;background:#2b5f99;"></div>
<div class="t" style="left:2796.82px;top:835.26px;font-size:31px;line-height:31px;color:#fff;letter-spacing:-1.5px;">BE</div>
<div class="r" style="left:2778.6px;top:909.6px;width:34.8px;height:34.8px;border-radius:50%;background:#2b5f99;"></div>
<div class="t" style="left:2786.32px;top:920.63px;font-size:14.5px;line-height:14.5px;color:#fff;">BE</div>
<div class="r" style="left:2820.6px;top:909.6px;width:34.8px;height:34.8px;border-radius:50%;background:#2b5f99;"></div>
<div class="t" style="left:2829.55px;top:920.63px;font-size:14.5px;line-height:14.5px;color:#fff;">JS</div>
<div class="r" style="left:2778.6px;top:948.1px;width:34.8px;height:34.8px;border-radius:50%;background:#2b5f99;"></div>
<div class="t" style="left:2786.32px;top:959.13px;font-size:14.5px;line-height:14.5px;color:#fff;">JM</div>
<div class="r" style="left:2820.6px;top:948.1px;width:34.8px;height:34.8px;border-radius:50%;background:#2b5f99;"></div>
<div class="t" style="left:2830.75px;top:959.13px;font-size:14.5px;line-height:14.5px;color:#fff;">JJ</div>
<div class="r" style="left:2778.6px;top:1026.3px;width:34.8px;height:34.8px;border-radius:50%;background:#2b5f99;"></div>
<div class="t" style="left:2787.55px;top:1037.33px;font-size:14.5px;line-height:14.5px;color:#fff;">JS</div>
<div class="r" style="left:2820.6px;top:1026.3px;width:34.8px;height:34.8px;border-radius:50%;background:#2b5f99;"></div>
<div class="t" style="left:2830.75px;top:1037.33px;font-size:14.5px;line-height:14.5px;color:#fff;">JJ</div>
<div class="r" style="left:2778.6px;top:1104.6px;width:34.8px;height:34.8px;border-radius:50%;background:#2b5f99;"></div>
<div class="t" style="left:2785.93px;top:1115.63px;font-size:14.5px;line-height:14.5px;color:#fff;">AR</div>
<div class="r" style="left:2820.6px;top:1104.6px;width:34.8px;height:34.8px;border-radius:50%;background:#2b5f99;"></div>
<div class="t" style="left:2828.32px;top:1115.63px;font-size:14.5px;line-height:14.5px;color:#fff;">JM</div>
<div class="r" style="left:2778.6px;top:1142.6px;width:34.8px;height:34.8px;border-radius:50%;background:#2b5f99;"></div>
<div class="t" style="left:2787.55px;top:1153.63px;font-size:14.5px;line-height:14.5px;color:#fff;">PJ</div>
<div class="r" style="left:2778.6px;top:1199.3999999999999px;width:34.8px;height:34.8px;border-radius:50%;background:#2b5f99;"></div>
<div class="t" style="left:2785.93px;top:1210.43px;font-size:14.5px;line-height:14.5px;color:#fff;">AR</div>
<div class="r" style="left:2820.6px;top:1199.3999999999999px;width:34.8px;height:34.8px;border-radius:50%;background:#2b5f99;"></div>
<div class="t" style="left:2828.32px;top:1210.43px;font-size:14.5px;line-height:14.5px;color:#fff;">BE</div>
<div class="r" style="left:2778.6px;top:1234.6px;width:34.8px;height:34.8px;border-radius:50%;background:#2b5f99;"></div>
<div class="t" style="left:2787.55px;top:1245.63px;font-size:14.5px;line-height:14.5px;color:#fff;">JS</div>
<div class="r" style="left:2820.6px;top:1234.6px;width:34.8px;height:34.8px;border-radius:50%;background:#2b5f99;"></div>
<div class="t" style="left:2828.32px;top:1245.63px;font-size:14.5px;line-height:14.5px;color:#fff;">JM</div>
<div class="r" style="left:2778px;top:1270px;width:40px;height:12.6px;overflow:hidden;"><div class="r" style="left:0.6px;top:2.6px;width:34.8px;height:34.8px;border-radius:50%;background:#2b5f99;"></div></div>
<div class="r" style="left:2778px;top:1300px;width:78px;height:2px;background:#e6e6e6;"></div>
<svg class="r" style="left:2795px;top:1333px" width="44" height="40" viewBox="0 0 44 40"><g fill="none" stroke="#ee8550" stroke-width="2.6" stroke-linejoin="round">
<path d="M6.5 3.8 H38 Q41.2 3.8 41.2 7 V27.5 Q41.2 30.7 38 30.7 H15.5 L8.5 36.2 V30.7 H6.5 Q3.3 30.7 3.3 27.5 V7 Q3.3 3.8 6.5 3.8 Z"/></g>
<rect x="12" y="12.3" width="20" height="2.8" fill="#ee8550"/><rect x="12" y="18" width="20" height="2.8" fill="#ee8550"/></svg>
<div class="r" style="left:2778px;top:1398px;width:78px;height:2px;background:#e6e6e6;"></div>
<svg class="r" style="left:2780px;top:1410px" width="60" height="62" viewBox="0 0 60 62"><circle cx="18.2" cy="18" r="11.7" fill="#dde3e8"/><circle cx="18.2" cy="18" r="8" fill="#17385a"/>
<circle cx="37.1" cy="37.7" r="18.4" fill="none" stroke="#ee8550" stroke-width="2.6"/>
<path d="M31.3 32.5 Q31.3 26.3 37.3 26.3 Q43.3 26.3 43.3 31.8 Q43.3 35 39.8 37 Q37.5 38.4 37.5 41 V42.5" fill="none" stroke="#ee8550" stroke-width="2.6"/><circle cx="37.5" cy="46.8" r="1.8" fill="#ee8550"/></svg>
</body></html>
